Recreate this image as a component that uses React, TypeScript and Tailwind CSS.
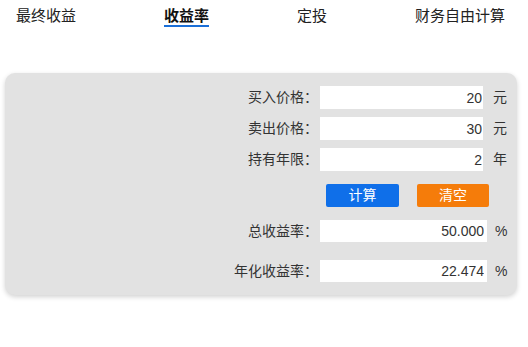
import React from "react";

const tabs = ["最终收益", "收益率", "定投", "财务自由计算"];

const inputs = [
  { label: "买入价格：", value: "20", unit: "元" },
  { label: "卖出价格：", value: "30", unit: "元" },
  { label: "持有年限：", value: "2", unit: "年" },
];

export default function App() {
  return (
    <div
      className="w-[528px] h-[347px] bg-white text-[#333]"
      style={{ fontFamily: '"Liberation Sans", "Noto Sans CJK SC", sans-serif' }}
    >
      {/* Tabs */}
      <div className="flex justify-between pl-[16px] pr-[23px] pt-[7px] h-[73px]">
        {tabs.map((t, i) => (
          <div key={t} className="flex flex-col">
            <span
              className={
                i === 1
                  ? "text-[15px] leading-[18px] font-bold text-[#111] border-b-2 border-[#1a6fd8] pb-[1px] h-[20px]"
                  : "text-[15px] leading-[18px] text-[#222]"
              }
            >
              {t}
            </span>
          </div>
        ))}
      </div>

      {/* Panel */}
      <div className="ml-[5px] w-[512px] h-[222px] bg-[#e2e2e2] rounded-[10px] shadow-[0_2px_5px_rgba(0,0,0,0.18)] pt-[13px] pl-[177px]">
        <div className="flex flex-col gap-[8px]">
          {inputs.map((r) => (
            <div key={r.label} className="flex items-center h-[23px]">
              <span className="w-[138px] text-right text-[14px] pr-[2px]">{r.label}</span>
              <input
                readOnly
                value={r.value}
                className="w-[163px] h-[23px] bg-white text-right text-[14px] pr-[1px] outline-none text-[#333]"
              />
              <span className="ml-[10px] text-[14px]">{r.unit}</span>
            </div>
          ))}
        </div>

        <div className="flex mt-[13px] ml-[144px] gap-[18px]">
          <button className="w-[73px] h-[23px] bg-[#0f6fe9] text-white text-[14px] rounded-[2px]">
            计算
          </button>
          <button className="w-[72px] h-[23px] bg-[#f57c0a] text-white text-[14px] rounded-[2px]">
            清空
          </button>
        </div>

        <div className="flex items-center h-[22px] mt-[13px]">
          <span className="w-[138px] text-right text-[14px] pr-[2px]">总收益率：</span>
          <input
            readOnly
            value="50.000"
            className="w-[167px] h-[22px] bg-white text-right text-[14px] pr-[3px] outline-none text-[#333]"
          />
          <span className="ml-[8px] text-[14px]">%</span>
        </div>

        <div className="flex items-center h-[22px] mt-[18px]">
          <span className="w-[138px] text-right text-[14px] pr-[2px]">年化收益率：</span>
          <input
            readOnly
            value="22.474"
            className="w-[167px] h-[22px] bg-white text-right text-[14px] pr-[3px] outline-none text-[#333]"
          />
          <span className="ml-[8px] text-[14px]">%</span>
        </div>
      </div>
    </div>
  );
}
